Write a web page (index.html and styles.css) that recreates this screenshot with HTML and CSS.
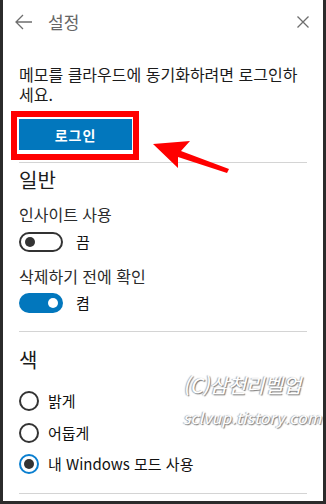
FILE: index.html
```html
<!DOCTYPE html>
<html lang="ko">
<head>
<meta charset="utf-8">
<link rel="stylesheet" href="styles.css">
</head>
<body>
<div class="panel">
  <div class="header">
    <svg class="back" width="18" height="16" viewBox="0 0 18 16"><path d="M8 1 L1 8 L8 15 M1 8 H17" fill="none" stroke="#6e6e6e" stroke-width="1.3"/></svg>
    <div class="title">설정</div>
    <svg class="close" width="12" height="12" viewBox="0 0 12 12"><path d="M0.5 0.5 L11.5 11.5 M11.5 0.5 L0.5 11.5" fill="none" stroke="#6e6e6e" stroke-width="1.3"/></svg>
  </div>
  <div class="content">
    <p class="intro">메모를 클라우드에 동기화하려면 로그인하세요.</p>
    <button class="login">로그인</button>
    <hr class="sep sep-top">
    <h2 class="heading">일반</h2>
    <div class="label first">인사이트 사용</div>
    <div class="toggle-row row1">
      <span class="toggle off"><span class="knob"></span></span>
      <span class="state">끔</span>
    </div>
    <div class="label second">삭제하기 전에 확인</div>
    <div class="toggle-row">
      <span class="toggle on"><span class="knob"></span></span>
      <span class="state">켬</span>
    </div>
    <hr class="sep sep-mid">
    <h2 class="heading color">색</h2>
    <div class="radios">
      <div class="radio-row"><span class="radio"></span><span class="rlabel">밝게</span></div>
      <div class="radio-row"><span class="radio"></span><span class="rlabel">어둡게</span></div>
      <div class="radio-row"><span class="radio checked"><span class="dot"></span></span><span class="rlabel">내 Windows 모드 사용</span></div>
    </div>
    <hr class="sep sep-bottom">
  </div>

  <div class="redbox"></div>
  <svg class="arrow" width="326" height="504" viewBox="0 0 326 504"><polygon points="153,144 190,141 181,151 229,169 227,173 178,157 178,168" fill="#ff0000"/></svg>
  <div class="watermark">
    <div class="wm1">(C)삼천리벨업</div>
    <div class="wm2">sclvup.tistory.com</div>
  </div>
</div>
</body>
</html>
```

FILE: styles.css
```css
html, body {
  margin: 0;
  padding: 0;
}
body {
  background: #2b2b2b;
  width: 326px;
  height: 504px;
  overflow: hidden;
  font-family: "Noto Sans CJK KR", "Noto Sans", sans-serif;
  color: #1b1b1b;
}
.panel {
  position: relative;
  margin: 0 3px;
  height: 501px;
  background: #ffffff;
  overflow: hidden;
}
.header {
  height: 44px;
  display: flex;
  align-items: center;
}
.back {
  margin-left: 12px;
  flex: none;
}
.title {
  margin-left: 15px;
  font-size: 17px;
  color: #666666;
  line-height: 20px;
}
.close {
  margin-left: auto;
  margin-right: 14px;
  flex: none;
}
.content {
  padding: 0 16px;
}
.intro {
  margin: 20px 0 0;
  font-size: 16px;
  line-height: 20px;
  color: #1b1b1b;
}
.login {
  display: block;
  margin-top: 15px;
  width: 113px;
  height: 31px;
  border: 0;
  padding: 0;
  background: #0277bd;
  color: #ffffff;
  font-family: "Noto Sans CJK KR", sans-serif;
  font-size: 14px;
  font-weight: 700;
  letter-spacing: 1px;
}
.sep {
  border: 0;
  height: 1px;
  background: #d4d4d4;
  margin: 0;
}
.sep-top { margin-top: 12px; }
.heading {
  margin: 4px 0 0;
  font-size: 20px;
  font-weight: 400;
  line-height: 26px;
  color: #1b1b1b;
}
.label {
  font-size: 16px;
  line-height: 20px;
  color: #2b2b2b;
}
.label.first { margin-top: 11px; }
.label.second { margin-top: 14px; }
.toggle-row {
  margin-top: 7px;
  display: flex;
  align-items: center;
  height: 20px;
}
.toggle-row.row1 { margin-top: 8px; }
.toggle {
  box-sizing: border-box;
  width: 44px;
  height: 20px;
  border-radius: 10px;
  display: flex;
  align-items: center;
  flex: none;
}
.toggle.off {
  border: 2px solid #333333;
  padding-left: 4px;
}
.toggle.on {
  background: #0277bd;
  justify-content: flex-end;
  padding-right: 5px;
}
.knob {
  width: 10px;
  height: 10px;
  border-radius: 50%;
}
.toggle.off .knob { background: #333333; }
.toggle.on .knob { background: #ffffff; }
.state {
  margin-left: 13px;
  font-size: 15px;
  line-height: 20px;
  color: #111111;
}
.sep-mid { margin-top: 18px; }
.heading.color {
  margin-top: 15px;
}
.radios {
  margin-top: 18px;
  display: flex;
  flex-direction: column;
  gap: 11.5px;
}
.radio-row {
  display: flex;
  align-items: center;
  height: 20px;
}
.radio {
  box-sizing: border-box;
  width: 20px;
  height: 20px;
  border: 2px solid #333333;
  border-radius: 50%;
  display: flex;
  align-items: center;
  justify-content: center;
  flex: none;
}
.radio.checked { border-color: #0a7fd0; }
.dot {
  width: 10px;
  height: 10px;
  border-radius: 50%;
  background: #333333;
}
.rlabel {
  margin-left: 9px;
  font-size: 15px;
  line-height: 20px;
  color: #111111;
}
.sep-bottom { margin-top: 19px; }

.redbox {
  position: absolute;
  left: 8px;
  top: 111px;
  width: 128px;
  height: 49px;
  box-sizing: border-box;
  border: 6px solid #ff0000;
}
.arrow {
  position: absolute;
  left: -3px;
  top: 0;
}
.watermark {
  position: absolute;
  left: 180px;
  top: 372px;
  color: #ffffff;
  font-style: italic;
  text-shadow: 1px 1px 1px #777777, -1px 0 1px #aaaaaa;
  white-space: nowrap;
}
.wm1 {
  font-size: 20px;
  line-height: 26px;
}
.wm2 {
  margin-top: 9px;
  font-size: 15.5px;
  line-height: 20px;
  letter-spacing: 0.3px;
}
```
